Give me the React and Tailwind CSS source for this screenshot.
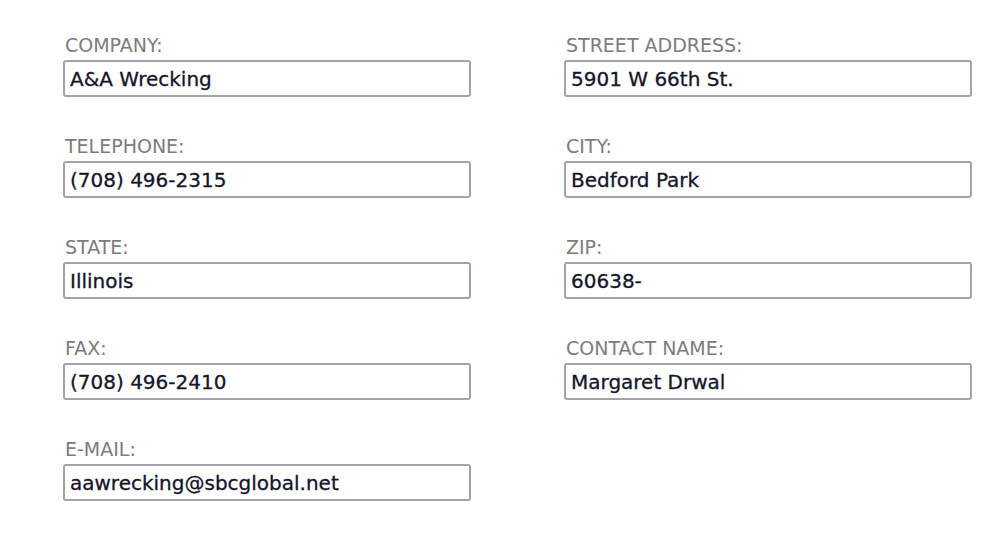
import React from "react";

const left = [
  { label: "COMPANY:", value: "A&A Wrecking" },
  { label: "TELEPHONE:", value: "(708) 496-2315" },
  { label: "STATE:", value: "Illinois" },
  { label: "FAX:", value: "(708) 496-2410" },
  { label: "E-MAIL:", value: "aawrecking@sbcglobal.net" },
];

const right = [
  { label: "STREET ADDRESS:", value: "5901 W 66th St." },
  { label: "CITY:", value: "Bedford Park" },
  { label: "ZIP:", value: "60638-" },
  { label: "CONTACT NAME:", value: "Margaret Drwal" },
];

// Một ô nhập: nhãn xám phía trên, hộp viền xám bên dưới
const Field = ({ label, value }) => (
  <div className="flex flex-col h-[101px]">
    <label className="text-[19px] leading-[22px] text-[#7c7c7c] pl-[2px] mb-[4px]">
      {label}
    </label>
    <input
      type="text"
      readOnly
      defaultValue={value}
      className="h-[37px] w-[408px] border-2 border-[#a2a2aa] rounded-[3px] bg-white px-[5px] text-[20px] text-[#15152a] outline-none [-webkit-text-stroke:0.3px_#15152a]"
      style={{ fontFamily: "inherit" }}
    />
  </div>
);

export default function App() {
  return (
    <div
      className="w-[999px] h-[544px] bg-white pt-[34px] pl-[63px] flex gap-[93px]"
      style={{ fontFamily: "'DejaVu Sans', sans-serif" }}
    >
      <div className="flex flex-col">
        {left.map((f) => (
          <Field key={f.label} {...f} />
        ))}
      </div>
      <div className="flex flex-col">
        {right.map((f) => (
          <Field key={f.label} {...f} />
        ))}
      </div>
    </div>
  );
}
